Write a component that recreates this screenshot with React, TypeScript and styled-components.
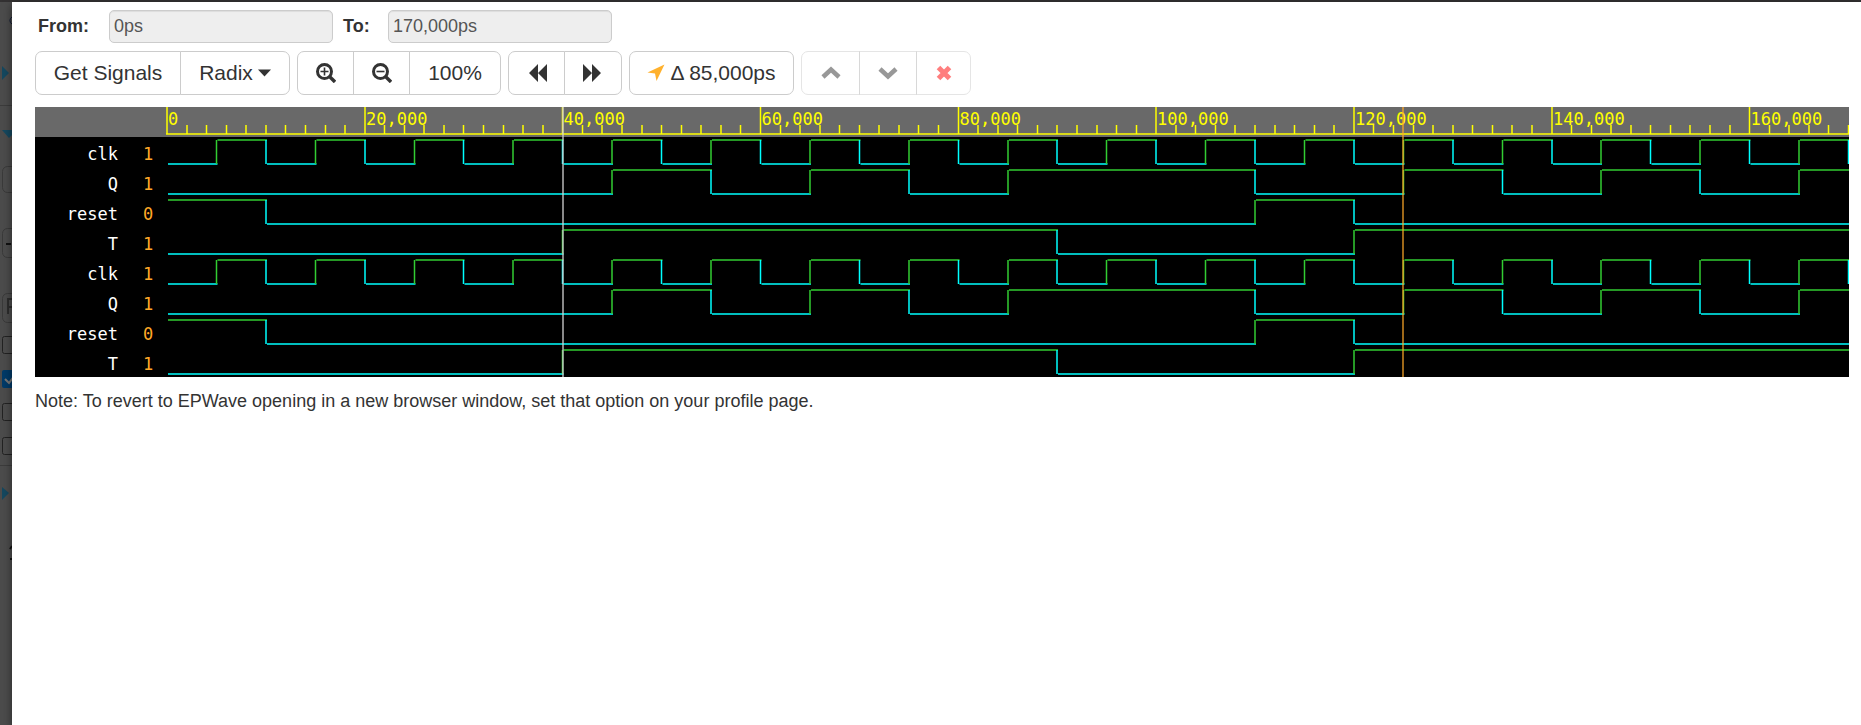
import React, { useLayoutEffect, useRef, useState } from "react";
import styled, { createGlobalStyle, css } from "styled-components";

const GlobalStyle = createGlobalStyle`
  * { box-sizing: border-box; }
  html, body, #root { height: 100%; }
  body {
    margin: 0;
    overflow: hidden;
    background: #4c4c4c;
    color: #333;
    font: 18px/25px "Liberation Sans", Arial, sans-serif;
  }
`;

const Page = styled.div`
  position: relative;
  display: flex;
  min-height: 100%;
  border-top: 2px solid #333132;
`;

const Backdrop = styled.div`
  flex: 0 0 12px;
  overflow: hidden;
`;

const BackdropSvg = styled.svg`
  display: block;
`;

const Modal = styled.main`
  position: relative;
  flex: 1;
  min-width: 0;
  padding: 8px 12px 24px 23px;
  background: #fff;
  box-shadow: 0 3px 9px rgba(0, 0, 0, 0.5);
`;

const RangeForm = styled.form`
  display: flex;
  align-items: center;
  padding-left: 3px;
`;

const RangeLabel = styled.label<{ $width: number }>`
  width: ${(p) => p.$width}px;
  font-weight: bold;
`;

const RangeInput = styled.input`
  width: 224px;
  height: 33px;
  margin-right: 10px;
  padding: 0 4px;
  border: 1px solid #ccc;
  border-radius: 5px;
  background: #eee;
  box-shadow: inset 0 1px 1px rgba(0, 0, 0, 0.075);
  color: #555;
  font: inherit;
`;

const Toolbar = styled.div`
  display: flex;
  flex-wrap: wrap;
  gap: 7px;
  margin: 8px 0 12px;
`;

const ButtonGroup = styled.div`
  display: flex;
`;

const ToolButton = styled.button<{ $width: number }>`
  display: flex;
  align-items: center;
  justify-content: center;
  gap: 5px;
  width: ${(p) => p.$width}px;
  height: 44px;
  padding: 0;
  border: 1px solid #ccc;
  background: #fff;
  color: #333;
  font: 21px/28px "Liberation Sans", Arial, sans-serif;
  white-space: nowrap;

  & + & { margin-left: -1px; }
  &:first-child { border-top-left-radius: 7px; border-bottom-left-radius: 7px; }
  &:last-child { border-top-right-radius: 7px; border-bottom-right-radius: 7px; }
  &:disabled { opacity: 0.5; }
`;

const Icon = styled.svg`
  display: block;
  flex: none;
`;

const Viewer = styled.section`
  display: flex;
  background: #000;
  font: 17px/30px "DejaVu Sans Mono", monospace;
`;

const SignalTable = styled.table`
  flex: 0 0 131px;
  width: 131px;
  border-collapse: collapse;
  table-layout: fixed;
`;

const HeadCell = styled.th<{ $width: number }>`
  width: ${(p) => p.$width}px;
  height: 30px;
  padding: 0;
  background: #696969;
`;

const cell = css`
  height: 30px;
  padding: 4px 0 0;
  line-height: 26px;
  font-weight: normal;
`;

const NameCell = styled.th`
  ${cell}
  color: #fff;
  text-align: right;
`;

const ValueCell = styled.td`
  ${cell}
  padding-left: 25px;
  color: #ffa827;
`;

const WaveArea = styled.div`
  flex: 1;
  min-width: 0;
  height: 270px;
`;

const WaveSvg = styled.svg`
  display: block;
  width: 100%;
  height: 270px;
`;

const Note = styled.p`
  margin: 12px 0 0;
`;

const END = 170000;
const HEAD = 30;
const ROW = 30;

type Signal = { name: string; value: number; start: 0 | 1; edges: number[] };

const clkEdges = Array.from({ length: 34 }, (_, i) => (i + 1) * 5000);
const dut: Signal[] = [
  { name: "clk", value: 1, start: 0, edges: clkEdges },
  { name: "Q", value: 1, start: 0, edges: [45000, 55000, 65000, 75000, 85000, 110000, 125000, 135000, 145000, 155000, 165000] },
  { name: "reset", value: 0, start: 1, edges: [10000, 110000, 120000] },
  { name: "T", value: 1, start: 0, edges: [40000, 90000, 120000] },
];
const signals: Signal[] = [...dut, ...dut];

function Trace({ signal, top, scale }: { signal: Signal; top: number; scale: (t: number) => number }) {
  const stops = [0, ...signal.edges.filter((t) => t < END), END];
  const parts: React.ReactNode[] = [];
  stops.slice(0, -1).forEach((t, i) => {
    const high = (signal.start + i) % 2 === 1;
    const color = high ? "#32cd32" : "#00ffff";
    const x = scale(t);
    const y = top + (high ? 3 : 27);
    if (i > 0) parts.push(<line key={`v${i}`} x1={x} x2={x} y1={top + 3} y2={top + 27} stroke={color} />);
    parts.push(<line key={`h${i}`} x1={x + 1} x2={scale(stops[i + 1]) + 1} y1={y} y2={y} stroke={color} />);
  });
  if (signal.edges.includes(END)) {
    parts.push(<line key="end" x1={scale(END)} x2={scale(END)} y1={top + 3} y2={top + 27} stroke="#00ffff" />);
  }
  return <g strokeWidth="1.5">{parts}</g>;
}

function Waves() {
  const ref = useRef<HTMLDivElement>(null);
  const [width, setWidth] = useState(1600);
  useLayoutEffect(() => {
    const el = ref.current!;
    const measure = () => setWidth(el.clientWidth);
    measure();
    const observer = new ResizeObserver(measure);
    observer.observe(el);
    return () => observer.disconnect();
  }, []);
  // Half-pixel snapping keeps the thin edges crisp.
  const scale = (t: number) => 1 + Math.round((t / END) * (width - 1.5) * 2) / 2;
  const ticks = Array.from({ length: 86 }, (_, i) => i * 2000);
  const cursor = Math.round(scale(40000));
  const marker = Math.floor(scale(125000));
  return (
    <WaveArea ref={ref}>
      <WaveSvg role="img" aria-label="Signal waveforms">
        <rect width="100%" height={HEAD} fill="#696969" />
        <g stroke="#ff0" strokeWidth="1.5">
          {ticks.map((t) => (
            <line key={t} x1={scale(t)} x2={scale(t)} y1={t % 20000 ? 18 : 0} y2={27} />
          ))}
          <line x1="0" x2="100%" y1="27" y2="27" />
        </g>
        <g fill="#ff0">
          {ticks.filter((t) => t % 20000 === 0).map((t) => (
            <text key={t} x={scale(t) + 1} y={18}>{t.toLocaleString("en-US")}</text>
          ))}
        </g>
        {signals.map((s, i) => (
          <Trace key={i} signal={s} top={HEAD + i * ROW} scale={scale} />
        ))}
        <line x1={cursor} x2={cursor} y1="0" y2="270" stroke="#d3d3d3" strokeOpacity="0.65" strokeWidth="2" />
        <line x1={marker} x2={marker} y1="0" y2="270" stroke="#ffa827" strokeOpacity="0.62" strokeWidth="2" />
      </WaveSvg>
    </WaveArea>
  );
}

const Magnifier = ({ plus }: { plus?: boolean }) => (
  <Icon width="20" height="20" viewBox="0 0 20 20" fill="none" stroke="#333">
    <circle cx="8.5" cy="8.5" r="7" strokeWidth="3" />
    <path d="M14 14 L19 19" strokeWidth="3.4" />
    <path d={plus ? "M4.5 8.5H12.5M8.5 4.5V12.5" : "M4.5 8.5H12.5"} strokeWidth="1.6" />
  </Icon>
);

function BackgroundPage() {
  return (
    <BackdropSvg width="12" height="723" viewBox="0 2 12 723" aria-hidden="true">
      <g fill="#15485f">
        <path d="M2 66 L9 73 L2 80Z" />
        <path d="M2 130 H17 L9 138Z" />
        <path d="M2 487 L9 493 L2 500Z" />
      </g>
      <path d="M0 105.500H12M0 465.500H12" stroke="#3c3c3c" />
      <g fill="none" stroke="#3a3a3a">
        <rect x="2.500" y="166.500" width="30" height="26" rx="5" />
        <rect x="2.500" y="228.500" width="30" height="29" rx="5" />
        <rect x="2.500" y="293.500" width="30" height="29" rx="5" />
      </g>
      <g fill="none" stroke="#222">
        <rect x="2.500" y="336.500" width="17" height="17" rx="2" />
        <rect x="2.500" y="403.500" width="17" height="17" rx="2" />
        <rect x="2.500" y="437.500" width="17" height="17" rx="2" />
      </g>
      <rect x="2" y="370" width="18" height="18" rx="2" fill="#003a68" />
      <path d="M5 379 L9 383 L15 375" fill="none" stroke="#777" strokeWidth="2" />
      <path d="M6 244H11" stroke="#111" strokeWidth="2" />
      <path d="M8 314V299H12M8 307H12" fill="none" stroke="#2d2d2d" strokeWidth="2" />
      <path d="M12 17 A4 4 0 0 0 12 24" fill="none" stroke="#101a35" />
      <path d="M10 549 L12 546M10 559H12" stroke="#111" strokeWidth="2" />
    </BackdropSvg>
  );
}

export default function App() {
  return (
    <>
      <GlobalStyle />
      <Page>
        <Backdrop><BackgroundPage /></Backdrop>
        <Modal>
          <RangeForm>
            <RangeLabel $width={71} htmlFor="from">From:</RangeLabel>
            <RangeInput id="from" readOnly value="0ps" />
            <RangeLabel $width={45} htmlFor="to">To:</RangeLabel>
            <RangeInput id="to" readOnly value="170,000ps" />
          </RangeForm>
          <Toolbar>
            <ButtonGroup>
              <ToolButton $width={146}>Get Signals</ToolButton>
              <ToolButton $width={110}>
                Radix
                <Icon width="13" height="8" viewBox="0 0 13 8"><path d="M0 0.500H13L6.500 7.500Z" fill="#333" /></Icon>
              </ToolButton>
            </ButtonGroup>
            <ButtonGroup>
              <ToolButton $width={57} aria-label="Zoom in"><Magnifier plus /></ToolButton>
              <ToolButton $width={57} aria-label="Zoom out"><Magnifier /></ToolButton>
              <ToolButton $width={92}>100%</ToolButton>
            </ButtonGroup>
            <ButtonGroup>
              <ToolButton $width={57} aria-label="Rewind">
                <Icon width="20" height="18" viewBox="0 0 20 18"><path d="M11 0V18L2 9ZM20 0V18L11 9Z" fill="#333" /></Icon>
              </ToolButton>
              <ToolButton $width={58} aria-label="Forward">
                <Icon width="20" height="18" viewBox="0 0 20 18"><path d="M0 0V18L9 9ZM9 0V18L18 9Z" fill="#333" /></Icon>
              </ToolButton>
            </ButtonGroup>
            <ButtonGroup>
              <ToolButton $width={165}>
                <Icon width="18" height="18" viewBox="0 0 18 18"><path d="M17.500 0.500L9.500 17L8 9.500L0.500 8.500Z" fill="#ffb12d" /></Icon>
                Δ 85,000ps
              </ToolButton>
            </ButtonGroup>
            <ButtonGroup>
              <ToolButton $width={59} disabled aria-label="Move up">
                <Icon width="20" height="14" viewBox="0 0 20 14"><path d="M2 11L10 3.500L18 11" fill="none" stroke="#333" strokeWidth="4.500" /></Icon>
              </ToolButton>
              <ToolButton $width={58} disabled aria-label="Move down">
                <Icon width="20" height="14" viewBox="0 0 20 14"><path d="M2 3L10 10.500L18 3" fill="none" stroke="#333" strokeWidth="4.500" /></Icon>
              </ToolButton>
              <ToolButton $width={55} disabled aria-label="Remove">
                <Icon width="16" height="16" viewBox="0 0 16 16"><path d="M2.500 2.500L13.500 13.500M13.500 2.500L2.500 13.500" stroke="#f00" strokeWidth="5" /></Icon>
              </ToolButton>
            </ButtonGroup>
          </Toolbar>
          <Viewer>
            <SignalTable>
              <thead>
                <tr>
                  <HeadCell $width={83} aria-label="Signal" />
                  <HeadCell $width={48} aria-label="Value" />
                </tr>
              </thead>
              <tbody>
                {signals.map((s, i) => (
                  <tr key={i}>
                    <NameCell scope="row">{s.name}</NameCell>
                    <ValueCell>{s.value}</ValueCell>
                  </tr>
                ))}
              </tbody>
            </SignalTable>
            <Waves />
          </Viewer>
          <Note>Note: To revert to EPWave opening in a new browser window, set that option on your profile page.</Note>
        </Modal>
      </Page>
    </>
  );
}
